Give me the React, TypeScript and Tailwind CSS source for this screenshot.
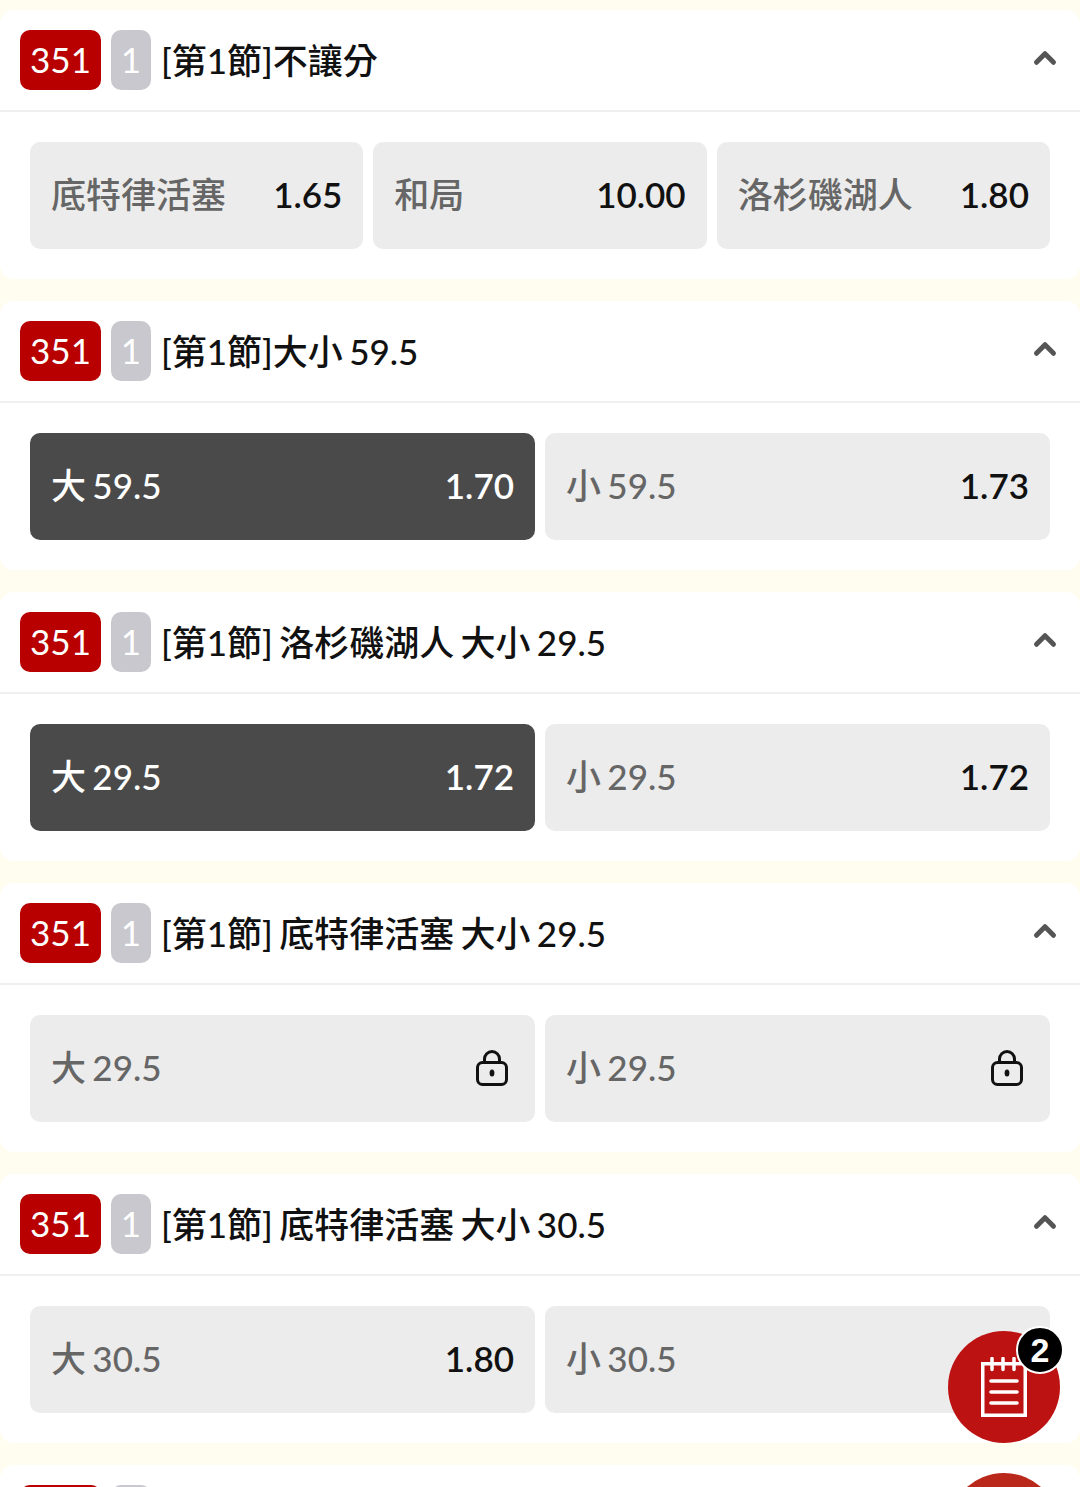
import { ChevronUp } from "lucide-react";

type Odd = { label: string; value?: string; active?: boolean; locked?: boolean };
type Market = { title: string; odds: Odd[] };

const markets: Market[] = [
  {
    title: "[第1節]不讓分",
    odds: [
      { label: "底特律活塞", value: "1.65" },
      { label: "和局", value: "10.00" },
      { label: "洛杉磯湖人", value: "1.80" },
    ],
  },
  {
    title: "[第1節]大小 59.5",
    odds: [
      { label: "大 59.5", value: "1.70", active: true },
      { label: "小 59.5", value: "1.73" },
    ],
  },
  {
    title: "[第1節] 洛杉磯湖人 大小 29.5",
    odds: [
      { label: "大 29.5", value: "1.72", active: true },
      { label: "小 29.5", value: "1.72" },
    ],
  },
  {
    title: "[第1節] 底特律活塞 大小 29.5",
    odds: [
      { label: "大 29.5", locked: true },
      { label: "小 29.5", locked: true },
    ],
  },
  {
    title: "[第1節] 底特律活塞 大小 30.5",
    odds: [
      { label: "大 30.5", value: "1.80" },
      { label: "小 30.5", value: "1.80" },
    ],
  },
  // only the top of this card is on screen
  { title: "", odds: [] },
];

const LockIcon = () => (
  <svg className="mr-1.5 -mt-0.5" width="32" height="36" viewBox="0 0 32 36" fill="none" stroke="#111" strokeWidth="3">
    <rect x="1.5" y="12.5" width="29" height="22" rx="5" />
    <path d="M8.5 12.5V9a7.5 7.5 0 0 1 15 0v3.5" />
    <ellipse cx="16" cy="23" rx="2.4" ry="3.6" fill="#111" stroke="none" />
  </svg>
);

const NoteIcon = () => (
  <svg width="46" height="60" viewBox="0 0 46 60" fill="none" stroke="#fff">
    <path d="M1.75 6.75h42.5v51.5H1.75z" strokeWidth="3.5" />
    <path d="M11 1.5v11M22 1.5v11M33 1.5v11" strokeWidth="3.5" strokeLinecap="round" />
    <path d="M10 24h26M10 35h26M10 46h26" strokeWidth="3.6" strokeLinecap="round" />
  </svg>
);

const OddButton = ({ odd }: { odd: Odd }) => (
  <div
    className={`flex h-[107px] flex-1 items-center justify-between rounded-[10px] px-[21px] ${
      odd.active ? "bg-[#4a4a4a] text-white" : "bg-[#ececec] text-[#666]"
    }`}
  >
    <span className="pb-0.5 font-medium">{odd.label}</span>
    {odd.value && (
      <span className={`pb-0.5 font-semibold ${odd.active ? "text-white" : "text-[#111]"}`}>{odd.value}</span>
    )}
    {odd.locked && <LockIcon />}
  </div>
);

const MarketCard = ({ market }: { market: Market }) => (
  <div className="h-[269px] shrink-0 rounded-[14px] bg-white">
    <div className="flex h-[102px] items-center border-b-2 border-[#f0f0f3] pl-5 pr-[18px]">
      <div className="flex h-[60px] w-[81px] items-center justify-center rounded-[10px] bg-[#b80000] pb-0.5 text-white">
        {market.title && "351"}
      </div>
      <div className="ml-2.5 flex h-[60px] w-10 items-center justify-center rounded-[10px] bg-[#c8c8ce] pb-0.5 text-white">
        {market.title && "1"}
      </div>
      <div className="ml-2.5 flex-1 font-medium text-[#111]">{market.title}</div>
      <ChevronUp size={34} strokeWidth={3.5} className="-mt-1 text-[#555]" />
    </div>
    <div className="flex gap-2.5 px-[30px] pt-[30px]">
      {market.odds.map((odd, i) => (
        <OddButton key={i} odd={odd} />
      ))}
    </div>
  </div>
);

export default function App() {
  return (
    <div
      className="relative flex h-[1487px] flex-col gap-[22px] overflow-hidden bg-[#fffcf0] pt-2.5 text-[35px] leading-none [word-spacing:-2.5px]"
      style={{ fontFamily: 'Lato, "Noto Sans CJK TC", sans-serif' }}
    >
      {markets.map((market, i) => (
        <MarketCard key={i} market={market} />
      ))}
      <div className="absolute left-[948px] top-[1331px] flex h-28 w-28 items-center justify-center rounded-full bg-[#bd1212]">
        <NoteIcon />
      </div>
      <div className="absolute left-[1016px] top-[1326px] flex h-12 w-12 items-center justify-center rounded-full border-2 border-white bg-black font-['Liberation_Sans'] text-[34px] font-bold text-white">
        2
      </div>
      <div className="absolute left-[948px] top-[1473px] h-28 w-28 rounded-full bg-[#b9281a]" />
    </div>
  );
}
